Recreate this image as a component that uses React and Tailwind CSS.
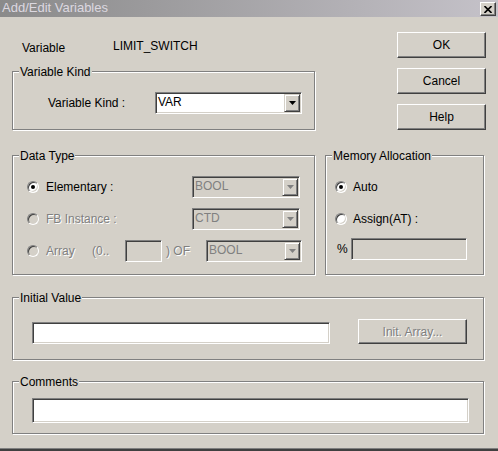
import React from 'react'

const sunken = 'border border-t-[#808080] border-l-[#808080] border-r-white border-b-white shadow-[inset_1px_1px_0_#404040,inset_-1px_-1px_0_#d4d0c8]'
const raised = 'border border-t-white border-l-white border-r-[#404040] border-b-[#404040] shadow-[inset_-1px_-1px_0_#808080] bg-[#d4d0c8]'
const dim = 'text-[#808080] [text-shadow:1px_1px_0_#fff]'

const Group = ({ label, className, children }) => (
  <div className={`relative border border-[#808080] shadow-[1px_1px_0_#fff,inset_1px_1px_0_#fff] ${className}`}>
    <span className="absolute -top-[7px] left-[6px] px-[1px] bg-[#d4d0c8] leading-[14px]">{label}</span>
    {children}
  </div>
)

const Arrow = ({ disabled }) => (
  <svg width="7" height="4" viewBox="0 0 7 4">
    <path d="M0 0h7L3.5 4z" fill={disabled ? '#808080' : '#000'} />
  </svg>
)

const Combo = ({ value, disabled, className }) => (
  <div className={`flex p-[1px] h-[22px] ${sunken} ${disabled ? 'bg-[#d4d0c8] text-[#808080]' : 'bg-white text-black'} ${className}`}>
    <span className="flex-1 pl-[1px] leading-[16px]">{value}</span>
    <div className="w-[16px] h-[18px] flex items-center justify-center bg-[#d4d0c8] border border-t-[#d4d0c8] border-l-[#d4d0c8] border-r-[#404040] border-b-[#404040] shadow-[inset_1px_1px_0_#fff,inset_-1px_-1px_0_#808080]">
      <Arrow disabled={disabled} />
    </div>
  </div>
)

const Radio = ({ checked, disabled }) => (
  <span className={`flex shrink-0 items-center justify-center w-[12px] h-[12px] rounded-full ${sunken} ${disabled ? 'bg-[#d4d0c8]' : 'bg-white'}`}>
    {checked && <span className="w-[4px] h-[4px] rounded-full bg-black" />}
  </span>
)

const Button = ({ children, disabled, className }) => (
  <div className={`flex items-center justify-center ${raised} ${disabled ? dim : 'text-black'} ${className}`}>
    {children}
  </div>
)

export default function App() {
  return (
    <div className="w-[498px] h-[451px] bg-[#d4d0c8] flex flex-col text-[12px] leading-[14px] text-black overflow-hidden font-['Liberation_Sans','Arial',sans-serif]">
      {/* title bar */}
      <div className="h-[17px] shrink-0 flex justify-between pl-[2px] pr-[2px] bg-linear-to-r from-[#8a8a8a] to-[#c5c2c9]">
        <span className="text-[13px] leading-[16px] text-[#dcd8e0]">Add/Edit Variables</span>
        <div className={`mt-[2px] w-[16px] h-[14px] flex items-center justify-center ${raised}`}>
          <svg width="8" height="7" viewBox="0 0 8 7">
            <path d="M0.5 0L7.5 7M7.5 0L0.5 7" stroke="#000" strokeWidth="1.6" />
          </svg>
        </div>
      </div>

      {/* variable + buttons */}
      <div className="flex items-start">
        <div className="ml-[12px] w-[303px] flex flex-col">
          <div className="mt-[22px] h-[16px] flex items-start">
            <span className="ml-[10px] mt-[2px] w-[91px]">Variable</span>
            <span>LIMIT_SWITCH</span>
          </div>
          <Group label="Variable Kind" className="mt-[16px] h-[59px]">
            <div className="flex items-center pt-[20px] pl-[35px]">
              <span className="w-[107px]">Variable Kind :</span>
              <Combo value="VAR" className="w-[147px]" />
            </div>
          </Group>
        </div>
        <div className="ml-[82px] mt-[15px] flex flex-col gap-[10px]">
          <Button className="w-[89px] h-[26px]">OK</Button>
          <Button className="w-[89px] h-[26px]">Cancel</Button>
          <Button className="w-[89px] h-[26px]">Help</Button>
        </div>
      </div>

      {/* data type + memory allocation */}
      <div className="flex mt-[25px] ml-[12px]">
        <Group label="Data Type" className="w-[303px] h-[120px]">
          <div className="flex flex-col gap-[10px] pt-[20px] pl-[14px]">
            <div className="flex items-center h-[22px]">
              <Radio checked />
              <span className="ml-[7px] w-[146px]">Elementary :</span>
              <Combo value="BOOL" disabled className="w-[108px]" />
            </div>
            <div className="flex items-center h-[22px]">
              <Radio disabled />
              <span className={`ml-[7px] w-[146px] ${dim}`}>FB Instance :</span>
              <Combo value="CTD" disabled className="w-[108px]" />
            </div>
            <div className="flex items-center h-[22px]">
              <Radio disabled />
              <span className={`ml-[7px] w-[46px] ${dim}`}>Array</span>
              <span className={`w-[33px] ${dim}`}>(0..</span>
              <div className={`w-[37px] h-[22px] bg-[#d4d0c8] ${sunken}`} />
              <span className={`ml-[4px] w-[40px] ${dim}`}>) OF</span>
              <Combo value="BOOL" disabled className="w-[96px]" />
            </div>
          </div>
        </Group>
        <Group label="Memory Allocation" className="ml-[10px] w-[159px] h-[120px]">
          <div className="flex flex-col pt-[20px] pl-[9px]">
            <div className="flex items-center h-[22px]">
              <Radio checked />
              <span className="ml-[6px]">Auto</span>
            </div>
            <div className="flex items-center h-[22px] mt-[10px]">
              <Radio />
              <span className="ml-[6px]">Assign(AT) :</span>
            </div>
            <div className="flex items-center h-[22px] mt-[8px]">
              <span className="ml-[2px] w-[14px]">%</span>
              <div className={`w-[116px] h-[22px] bg-[#d4d0c8] ${sunken}`} />
            </div>
          </div>
        </Group>
      </div>

      {/* initial value */}
      <Group label="Initial Value" className="mt-[22px] ml-[12px] w-[472px] h-[63px] shrink-0">
        <div className="flex items-end pt-[21px] pl-[19px]">
          <div className={`w-[298px] h-[22px] bg-white ${sunken}`} />
          <Button disabled className="ml-[28px] w-[109px] h-[25px]">Init. Array...</Button>
        </div>
      </Group>

      {/* comments */}
      <Group label="Comments" className="mt-[21px] ml-[12px] w-[472px] h-[53px] shrink-0">
        <div className="pt-[16px] pl-[19px]">
          <div className={`w-[437px] h-[25px] bg-white ${sunken}`} />
        </div>
      </Group>

      <div className="mt-auto h-[3px] shrink-0 bg-[#404040] border-t border-[#808080]" />
    </div>
  )
}
